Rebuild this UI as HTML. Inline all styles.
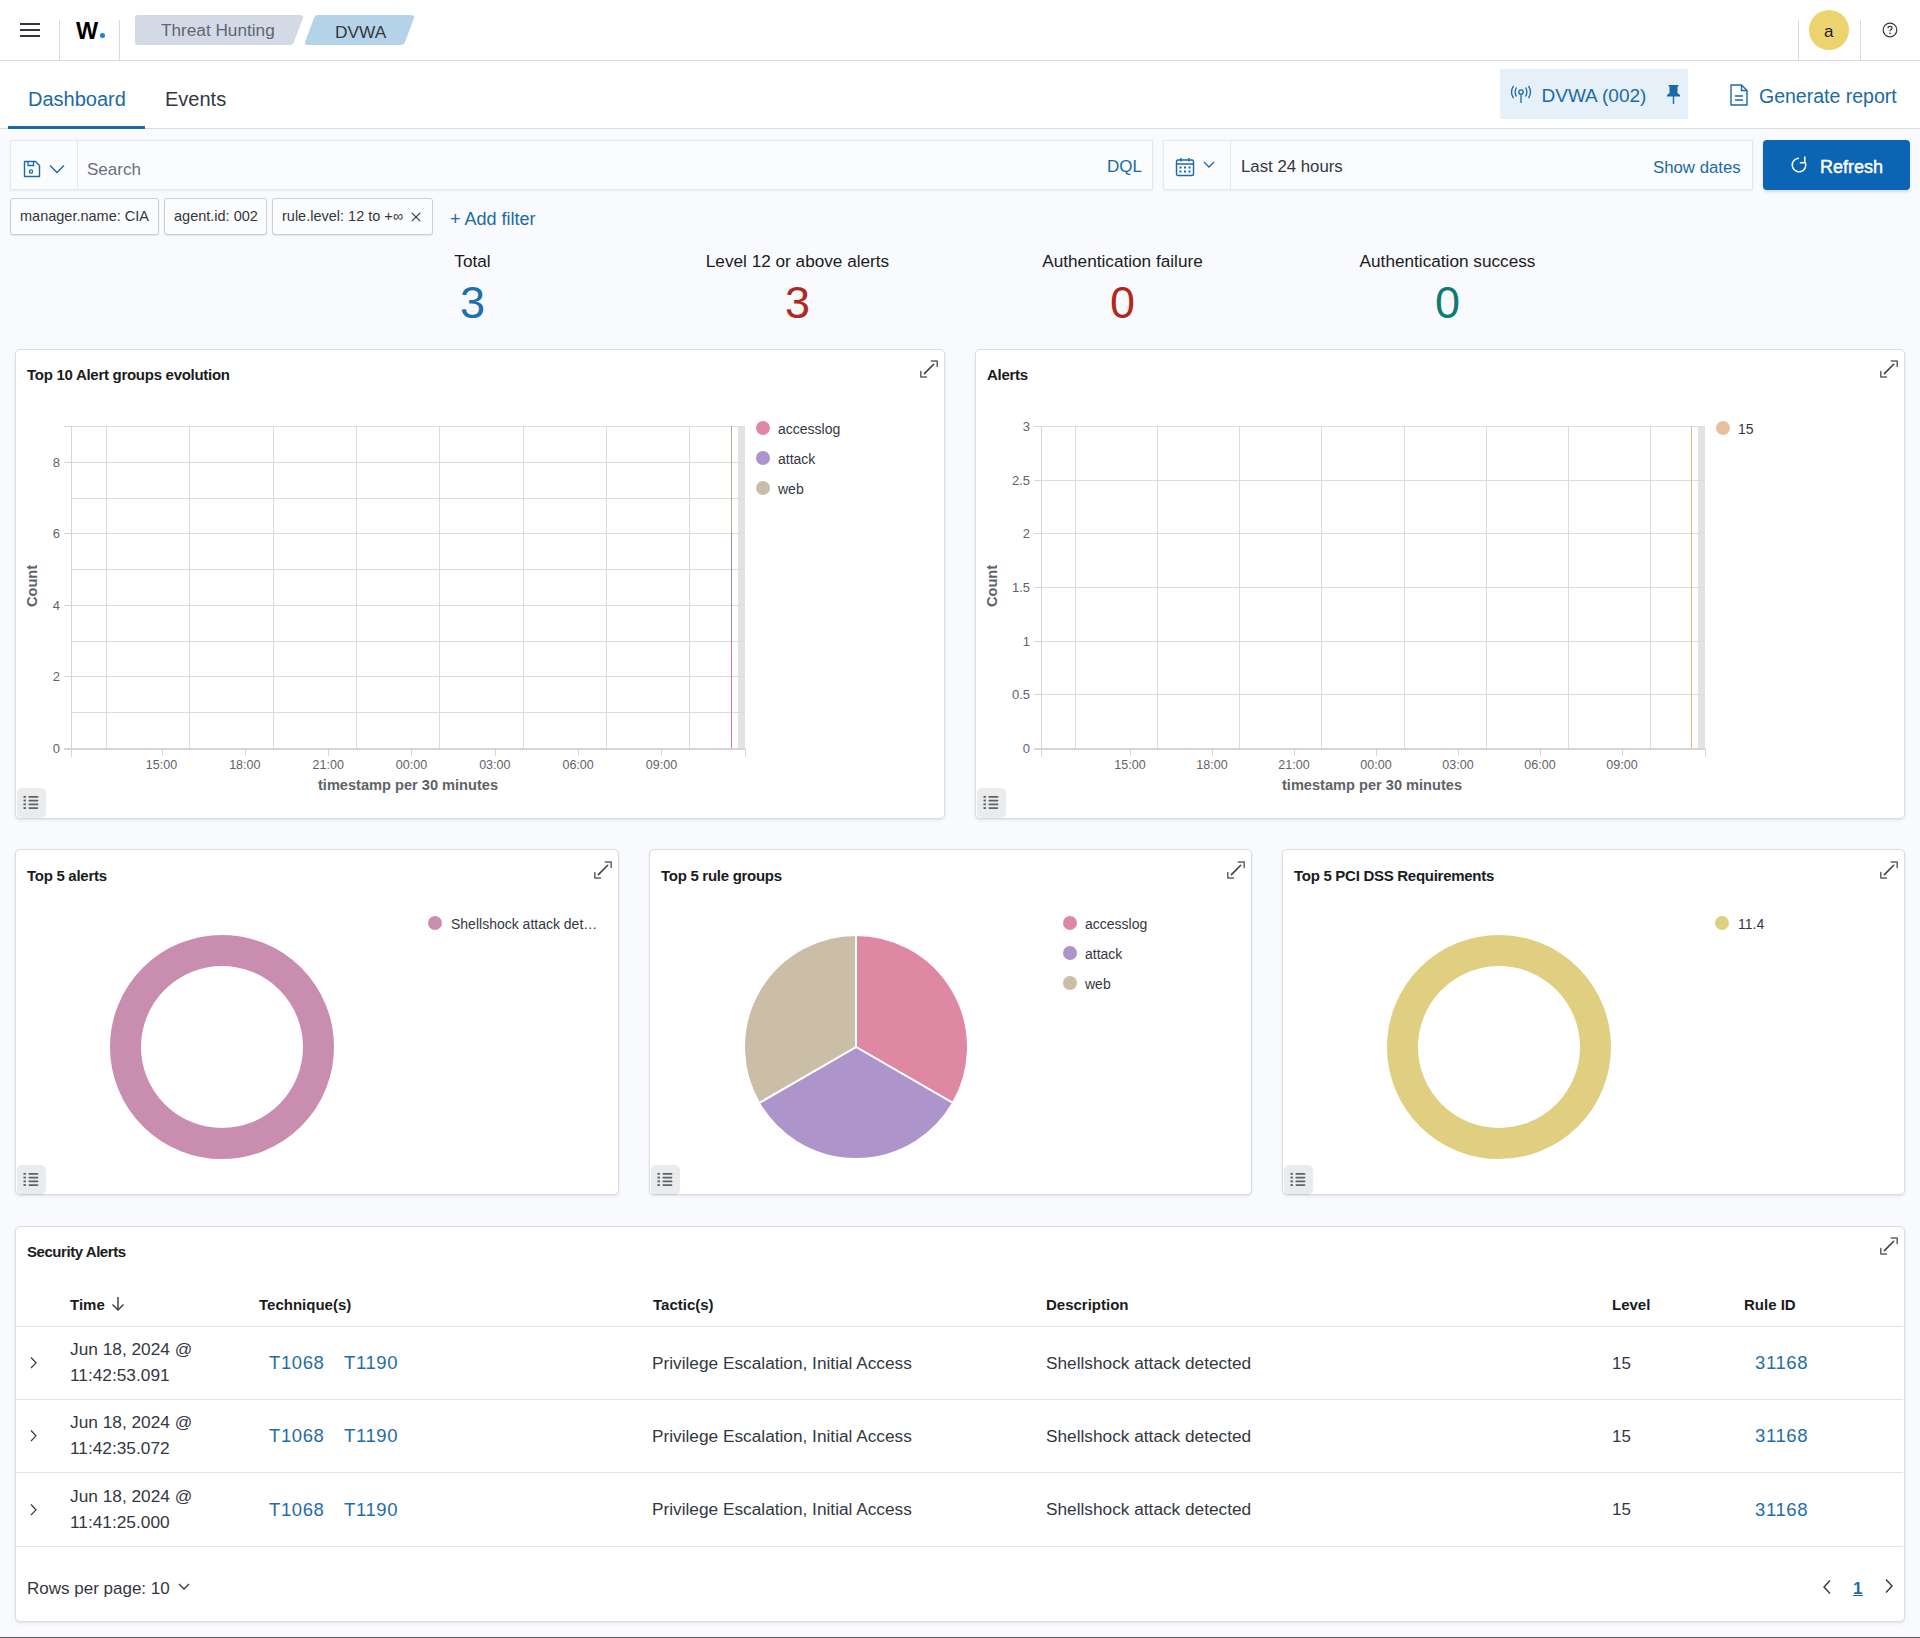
<!DOCTYPE html>
<html><head><meta charset="utf-8">
<style>
*{box-sizing:border-box;margin:0;padding:0}
html,body{width:1920px;height:1638px;overflow:hidden}
body{background:#F9FAFD;font-family:"Liberation Sans",sans-serif;color:#343741;position:relative}
.abs{position:absolute}
.t{position:absolute;white-space:nowrap;line-height:1}
#hdr{position:absolute;left:0;top:0;width:1920px;height:61px;background:#fff;border-bottom:1px solid #D9DADF}
#tabs{position:absolute;left:0;top:61px;width:1920px;height:68px;background:#fff;border-bottom:1px solid #D9DADF}
.vsep{position:absolute;top:20px;width:1px;height:40px;background:#D8DBE0}
.panel{position:absolute;background:#fff;border:1px solid #D9DCE2;border-radius:5px;box-shadow:0 1px 2px rgba(0,0,0,.06),0 2px 4px rgba(0,0,0,.04)}
.ptitle{position:absolute;left:11px;top:17px;font-size:15px;letter-spacing:-0.28px;font-weight:bold;color:#1a1c21;white-space:nowrap;line-height:1}
.expand{position:absolute;width:20px;height:20px}
.listbtn{position:absolute;width:29px;height:29px;background:#EAEBEC;border-radius:5px;box-shadow:0 1px 1px rgba(0,0,0,.08)}
.pill{position:absolute;top:198px;height:37px;background:#FBFCFD;border:1px solid #C9CED8;border-radius:3px;box-shadow:0 1px 1px rgba(0,0,0,.08);font-size:14.5px;color:#343741;padding:0 9px;line-height:34px;white-space:nowrap}
.th{position:absolute;top:1297px;font-size:15px;font-weight:bold;color:#1a1c21;white-space:nowrap;line-height:1}
.row{position:absolute;left:16px;width:1887px;height:1px;background:#E2E4E8}
.cell{position:absolute;font-size:17px;color:#343741;white-space:nowrap;line-height:1}
.link{position:absolute;font-size:18.5px;letter-spacing:0.6px;color:#1F6DA8;white-space:nowrap;line-height:1}
.lg{position:absolute;font-size:14px;color:#343741;white-space:nowrap;line-height:1}
.dot{position:absolute;width:14px;height:14px;border-radius:50%}
</style></head><body>

<!-- HEADER -->
<div id="hdr">
  <svg class="abs" style="left:20px;top:22px" width="20" height="16" viewBox="0 0 20 16">
    <rect x="0" y="1" width="20" height="2" fill="#343741"/>
    <rect x="0" y="7" width="20" height="2" fill="#343741"/>
    <rect x="0" y="13" width="20" height="2" fill="#343741"/>
  </svg>
  <div class="vsep" style="left:59px"></div>
  <div class="t" style="left:76px;top:20px;font-size:23px;font-weight:bold;color:#000;transform:scaleX(1.02);transform-origin:left">W</div>
  <div class="abs" style="left:100px;top:33px;width:5px;height:5px;border-radius:50%;background:#1F7CE8"></div>
  <div class="vsep" style="left:119px"></div>
  <svg class="abs" style="left:135px;top:15px" width="290" height="30" viewBox="0 0 290 30">
    <path d="M3 0 H165 Q169 0 168 3 L159 27 Q158 30 154 30 H3 Q0 30 0 27 V3 Q0 0 3 0Z" fill="#D3DAE6"/>
    <path d="M183 0 H276 Q280 0 279 3 L270 27 Q269 30 265 30 H173 Q169 30 170 27 L179 3 Q180 0 183 0Z" fill="#B4D3E9"/>
  </svg>
  <div class="t" style="left:161px;top:22px;font-size:17.2px;color:#5E6675">Threat Hunting</div>
  <div class="t" style="left:335px;top:24px;font-size:17.3px;color:#343741">DVWA</div>
  <div class="vsep" style="left:1798px"></div>
  <div class="abs" style="left:1809px;top:10px;width:40px;height:40px;border-radius:50%;background:#EDD36E"></div>
  <div class="t" style="left:1824px;top:23px;font-size:17px;color:#1a1c21">a</div>
  <div class="vsep" style="left:1860px"></div>
  <svg class="abs" style="left:1882px;top:22px" width="16" height="16" viewBox="0 0 16 16">
    <circle cx="8" cy="8" r="6.8" fill="none" stroke="#343741" stroke-width="1.2"/>
    <path d="M6 6.2 Q6 4.3 8 4.3 Q10 4.3 10 6.1 Q10 7.3 8.6 7.9 Q8 8.2 8 9.3" fill="none" stroke="#343741" stroke-width="1.2"/>
    <circle cx="8" cy="11.4" r="0.8" fill="#343741"/>
  </svg>
</div>

<!-- TABS -->
<div id="tabs">
  <div class="t" style="left:28px;top:28px;font-size:20px;color:#1A6AA6">Dashboard</div>
  <div class="abs" style="left:8px;top:65px;width:137px;height:3px;background:#1A6AA6"></div>
  <div class="t" style="left:165px;top:28px;font-size:20px;color:#343741">Events</div>
  <div class="abs" style="left:1500px;top:8px;width:188px;height:50px;background:#E6F0F8"></div>
  <svg class="abs" style="left:1510px;top:24px" width="22" height="20" viewBox="0 0 22 20">
    <g fill="none" stroke="#1A6AA6" stroke-width="1.3">
      <circle cx="11" cy="7" r="2.2"/>
      <path d="M11 9.2 V18"/>
      <path d="M6.5 2.5 Q3.8 7 6.5 11.5"/><path d="M15.5 2.5 Q18.2 7 15.5 11.5"/>
      <path d="M3.5 0.8 Q-0.5 7 3.5 13.2"/><path d="M18.5 0.8 Q22.5 7 18.5 13.2"/>
    </g>
  </svg>
  <div class="t" style="left:1541.5px;top:25px;font-size:19px;color:#1A6AA6">DVWA (002)</div>
  <svg class="abs" style="left:1666px;top:23px" width="15" height="20" viewBox="0 0 15 20">
    <path d="M3 1 H12 Q12.5 1 12.5 2 L11.5 3 V9 L14 11 V12.5 H1 V11 L3.5 9 V3 L2.5 2 Q2.5 1 3 1Z" fill="#1A6AA6"/>
    <rect x="6.8" y="12" width="1.4" height="8" fill="#1A6AA6"/>
  </svg>
  <svg class="abs" style="left:1729px;top:23px" width="20" height="22" viewBox="0 0 20 22">
    <path d="M2 1 H12.5 L18 6.5 V21 H2 Z" fill="none" stroke="#1A6AA6" stroke-width="1.4" stroke-linejoin="round"/>
    <path d="M12.5 1 V6.5 H18" fill="none" stroke="#1A6AA6" stroke-width="1.4"/>
    <path d="M6 12 H14 M6 16 H14" stroke="#1A6AA6" stroke-width="1.4"/>
  </svg>
  <div class="t" style="left:1759px;top:26px;font-size:19.5px;color:#1A6AA6">Generate report</div>
</div>

<!-- SEARCH BAR -->
<div class="abs" style="left:10px;top:140px;width:1143px;height:50px;background:#FBFCFD;border:1px solid #E3E7EE;box-shadow:0 1px 2px rgba(0,0,0,.06)"></div>
<div class="abs" style="left:77px;top:141px;width:1px;height:48px;background:#E3E7EE"></div>
<svg class="abs" style="left:23px;top:160px" width="18" height="18" viewBox="0 0 18 18">
  <path d="M1.5 1.5 H12.5 L16.5 5.5 V16.5 H1.5 Z" fill="none" stroke="#1A6AA6" stroke-width="1.4" stroke-linejoin="round"/>
  <path d="M5 1.5 V5.5 H10.5 V1.5" fill="none" stroke="#1A6AA6" stroke-width="1.3"/>
  <circle cx="8" cy="11.4" r="1.6" fill="none" stroke="#1A6AA6" stroke-width="1.3"/>
</svg>
<svg class="abs" style="left:49px;top:164px" width="16" height="10" viewBox="0 0 16 10">
  <path d="M1 1.5 L8 8.5 L15 1.5" fill="none" stroke="#1A6AA6" stroke-width="1.4"/>
</svg>
<div class="t" style="left:87px;top:161px;font-size:17px;color:#69707D">Search</div>
<div class="t" style="left:1107px;top:158px;font-size:17px;color:#1A6AA6">DQL</div>

<div class="abs" style="left:1163px;top:140px;width:590px;height:50px;background:#FBFCFD;border:1px solid #E3E7EE;box-shadow:0 1px 2px rgba(0,0,0,.06)"></div>
<div class="abs" style="left:1230px;top:141px;width:1px;height:48px;background:#E3E7EE"></div>
<svg class="abs" style="left:1175px;top:157px" width="20" height="20" viewBox="0 0 20 20">
  <rect x="1.5" y="3" width="17" height="15.5" rx="1.5" fill="none" stroke="#1A6AA6" stroke-width="1.4"/>
  <path d="M1.5 7 H18.5 M6 1 V4.5 M14 1 V4.5" stroke="#1A6AA6" stroke-width="1.4"/>
  <g fill="#1A6AA6"><rect x="4.5" y="9.5" width="2" height="2"/><rect x="9" y="9.5" width="2" height="2"/><rect x="13.5" y="9.5" width="2" height="2"/><rect x="4.5" y="13.5" width="2" height="2"/><rect x="9" y="13.5" width="2" height="2"/><rect x="13.5" y="13.5" width="2" height="2"/></g>
</svg>
<svg class="abs" style="left:1203px;top:161px" width="12" height="8" viewBox="0 0 12 8">
  <path d="M1 1 L6 6 L11 1" fill="none" stroke="#1A6AA6" stroke-width="1.3"/>
</svg>
<div class="t" style="left:1241px;top:159px;font-size:16.8px;color:#343741">Last 24 hours</div>
<div class="t" style="left:1653px;top:160px;font-size:16.8px;color:#1A6AA6">Show dates</div>

<div class="abs" style="left:1763px;top:140px;width:147px;height:50px;background:#0B64B4;border-radius:4px;box-shadow:0 2px 3px rgba(0,0,0,.12)"></div>
<svg class="abs" style="left:1790px;top:156px" width="18" height="18" viewBox="0 0 18 18">
  <path d="M9 2.2 A6.8 6.8 0 1 0 15.2 6.2" fill="none" stroke="#fff" stroke-width="1.5"/>
  <path d="M14.8 0.6 V6.8 H9.8" fill="none" stroke="#fff" stroke-width="1.5"/>
</svg>
<div class="t" style="left:1820px;top:158px;font-size:18px;color:#fff;-webkit-text-stroke:0.45px #fff">Refresh</div>

<!-- FILTER PILLS -->
<div class="pill" style="left:10px;width:149px">manager.name: CIA</div>
<div class="pill" style="left:164px;width:103px">agent.id: 002</div>
<div class="pill" style="left:272px;width:161px">rule.level: 12 to +∞ <svg style="position:absolute;left:138px;top:13px" width="10" height="10" viewBox="0 0 10 10"><path d="M0.8 0.8 L9.2 9.2 M9.2 0.8 L0.8 9.2" stroke="#343741" stroke-width="1.2"/></svg></div>
<div class="t" style="left:450px;top:210px;font-size:18px;color:#1A6AA6">+ Add filter</div>

<!-- STATS -->
<div class="t" style="left:310px;width:325px;text-align:center;top:253px;font-size:17.2px;color:#1a1c21">Total</div>
<div class="t" style="left:310px;width:325px;text-align:center;top:280px;font-size:45px;color:#1B6FB3">3</div>
<div class="t" style="left:635px;width:325px;text-align:center;top:253px;font-size:17.2px;color:#1a1c21">Level 12 or above alerts</div>
<div class="t" style="left:635px;width:325px;text-align:center;top:280px;font-size:45px;color:#B1291E">3</div>
<div class="t" style="left:960px;width:325px;text-align:center;top:253px;font-size:17.2px;color:#1a1c21">Authentication failure</div>
<div class="t" style="left:960px;width:325px;text-align:center;top:280px;font-size:45px;color:#B1291E">0</div>
<div class="t" style="left:1285px;width:325px;text-align:center;top:253px;font-size:17.2px;color:#1a1c21">Authentication success</div>
<div class="t" style="left:1285px;width:325px;text-align:center;top:280px;font-size:45px;color:#0E7B74">0</div>

<!--PANELS-->
<div class="panel" style="left:15px;top:349px;width:930px;height:470px">
<div class="ptitle" style="top:17.3px">Top 10 Alert groups evolution</div>
</div>
<svg class="abs" style="left:920px;top:360px" width="18" height="18" viewBox="0 0 18 18"><g fill="none" stroke-width="1.5" stroke-linejoin="round" stroke-linecap="round"><path d="M4.4 13.6 L13.7 4.3" stroke="#3a3d42"/><path d="M11.3 0.9 H17.2 V6.5 M0.8 11.6 V17.1 H6.5" stroke="#5f6368"/></g></svg>
<div class="listbtn" style="left:17px;top:788px"><svg class="abs" style="left:0;top:0" width="29" height="29" viewBox="0 0 29 29"><g fill="#5f6368"><rect x="6.5" y="7.9" width="2.4" height="1.9"/><rect x="6.5" y="11.6" width="2.4" height="1.9"/><rect x="6.5" y="15.4" width="2.4" height="1.9"/><rect x="6.5" y="19.1" width="2.4" height="1.9"/><rect x="11.4" y="8" width="10" height="1.7" rx=".8"/><rect x="11.4" y="11.7" width="10" height="1.7" rx=".8"/><rect x="11.4" y="15.5" width="10" height="1.7" rx=".8"/><rect x="11.4" y="19.2" width="10" height="1.7" rx=".8"/></g></svg></div>
<svg class="abs" style="left:0;top:0" width="1920" height="830" viewBox="0 0 1920 830">
<rect x="738" y="426" width="7" height="322" fill="#E3E3E3"/>
<line x1="71" y1="748.5" x2="745" y2="748.5" stroke="#DCDCDC" stroke-width="1"/>
<line x1="71" y1="712.5" x2="745" y2="712.5" stroke="#DCDCDC" stroke-width="1"/>
<line x1="71" y1="676.5" x2="745" y2="676.5" stroke="#DCDCDC" stroke-width="1"/>
<line x1="71" y1="641.5" x2="745" y2="641.5" stroke="#DCDCDC" stroke-width="1"/>
<line x1="71" y1="605.5" x2="745" y2="605.5" stroke="#DCDCDC" stroke-width="1"/>
<line x1="71" y1="569.5" x2="745" y2="569.5" stroke="#DCDCDC" stroke-width="1"/>
<line x1="71" y1="533.5" x2="745" y2="533.5" stroke="#DCDCDC" stroke-width="1"/>
<line x1="71" y1="498.5" x2="745" y2="498.5" stroke="#DCDCDC" stroke-width="1"/>
<line x1="71" y1="462.5" x2="745" y2="462.5" stroke="#DCDCDC" stroke-width="1"/>
<line x1="71" y1="426.5" x2="745" y2="426.5" stroke="#DCDCDC" stroke-width="1"/>
<line x1="106.5" y1="426" x2="106.5" y2="748" stroke="#DCDCDC" stroke-width="1"/>
<line x1="189.5" y1="426" x2="189.5" y2="748" stroke="#DCDCDC" stroke-width="1"/>
<line x1="273.5" y1="426" x2="273.5" y2="748" stroke="#DCDCDC" stroke-width="1"/>
<line x1="356.5" y1="426" x2="356.5" y2="748" stroke="#DCDCDC" stroke-width="1"/>
<line x1="439.5" y1="426" x2="439.5" y2="748" stroke="#DCDCDC" stroke-width="1"/>
<line x1="523.5" y1="426" x2="523.5" y2="748" stroke="#DCDCDC" stroke-width="1"/>
<line x1="606.5" y1="426" x2="606.5" y2="748" stroke="#DCDCDC" stroke-width="1"/>
<line x1="689.5" y1="426" x2="689.5" y2="748" stroke="#DCDCDC" stroke-width="1"/>
<rect x="731" y="641" width="1" height="107" fill="#D07894"/>
<rect x="731" y="533" width="1" height="108" fill="#9A84C0"/>
<rect x="731" y="426" width="1" height="107" fill="#B8AA8E"/>
<line x1="71.5" y1="426" x2="71.5" y2="748" stroke="#D6D6D6" stroke-width="1"/>
<line x1="64" y1="748.5" x2="71" y2="748.5" stroke="#D6D6D6" stroke-width="1"/>
<text x="60" y="753.0" text-anchor="end" font-size="13" fill="#5f6368" font-family="Liberation Sans">0</text>
<line x1="64" y1="676.5" x2="71" y2="676.5" stroke="#D6D6D6" stroke-width="1"/>
<text x="60" y="681.0" text-anchor="end" font-size="13" fill="#5f6368" font-family="Liberation Sans">2</text>
<line x1="64" y1="605.5" x2="71" y2="605.5" stroke="#D6D6D6" stroke-width="1"/>
<text x="60" y="610.0" text-anchor="end" font-size="13" fill="#5f6368" font-family="Liberation Sans">4</text>
<line x1="64" y1="533.5" x2="71" y2="533.5" stroke="#D6D6D6" stroke-width="1"/>
<text x="60" y="538.0" text-anchor="end" font-size="13" fill="#5f6368" font-family="Liberation Sans">6</text>
<line x1="64" y1="462.5" x2="71" y2="462.5" stroke="#D6D6D6" stroke-width="1"/>
<text x="60" y="467.0" text-anchor="end" font-size="13" fill="#5f6368" font-family="Liberation Sans">8</text>
<line x1="64" y1="426.5" x2="71" y2="426.5" stroke="#D6D6D6" stroke-width="1"/>
<rect x="64" y="748" width="682" height="2" fill="#D6D6D6"/>
<rect x="71" y="748" width="1" height="9" fill="#D6D6D6"/>
<rect x="745" y="748" width="1" height="9" fill="#D6D6D6"/>
<rect x="162" y="748" width="1" height="8" fill="#D6D6D6"/>
<text x="161.5" y="769" text-anchor="middle" font-size="12.5" fill="#5f6368" font-family="Liberation Sans">15:00</text>
<rect x="245" y="748" width="1" height="8" fill="#D6D6D6"/>
<text x="244.8" y="769" text-anchor="middle" font-size="12.5" fill="#5f6368" font-family="Liberation Sans">18:00</text>
<rect x="328" y="748" width="1" height="8" fill="#D6D6D6"/>
<text x="328.2" y="769" text-anchor="middle" font-size="12.5" fill="#5f6368" font-family="Liberation Sans">21:00</text>
<rect x="411" y="748" width="1" height="8" fill="#D6D6D6"/>
<text x="411.5" y="769" text-anchor="middle" font-size="12.5" fill="#5f6368" font-family="Liberation Sans">00:00</text>
<rect x="495" y="748" width="1" height="8" fill="#D6D6D6"/>
<text x="494.8" y="769" text-anchor="middle" font-size="12.5" fill="#5f6368" font-family="Liberation Sans">03:00</text>
<rect x="578" y="748" width="1" height="8" fill="#D6D6D6"/>
<text x="578.1" y="769" text-anchor="middle" font-size="12.5" fill="#5f6368" font-family="Liberation Sans">06:00</text>
<rect x="661" y="748" width="1" height="8" fill="#D6D6D6"/>
<text x="661.5" y="769" text-anchor="middle" font-size="12.5" fill="#5f6368" font-family="Liberation Sans">09:00</text>
<text x="408" y="790" text-anchor="middle" font-size="14.6" font-weight="bold" fill="#5f6368" font-family="Liberation Sans">timestamp per 30 minutes</text>
<text transform="translate(37,586) rotate(-90)" text-anchor="middle" font-size="14.6" font-weight="bold" fill="#5f6368" font-family="Liberation Sans">Count</text>
</svg>
<div class="dot" style="left:756px;top:421px;background:#DE88A4"></div>
<div class="lg" style="left:778px;top:422px">accesslog</div>
<div class="dot" style="left:756px;top:451px;background:#AD94CA"></div>
<div class="lg" style="left:778px;top:452px">attack</div>
<div class="dot" style="left:756px;top:481px;background:#CBBEA6"></div>
<div class="lg" style="left:778px;top:482px">web</div>
<div class="panel" style="left:975px;top:349px;width:930px;height:470px">
<div class="ptitle" style="top:17.3px">Alerts</div>
</div>
<svg class="abs" style="left:1880px;top:360px" width="18" height="18" viewBox="0 0 18 18"><g fill="none" stroke-width="1.5" stroke-linejoin="round" stroke-linecap="round"><path d="M4.4 13.6 L13.7 4.3" stroke="#3a3d42"/><path d="M11.3 0.9 H17.2 V6.5 M0.8 11.6 V17.1 H6.5" stroke="#5f6368"/></g></svg>
<div class="listbtn" style="left:977px;top:788px"><svg class="abs" style="left:0;top:0" width="29" height="29" viewBox="0 0 29 29"><g fill="#5f6368"><rect x="6.5" y="7.9" width="2.4" height="1.9"/><rect x="6.5" y="11.6" width="2.4" height="1.9"/><rect x="6.5" y="15.4" width="2.4" height="1.9"/><rect x="6.5" y="19.1" width="2.4" height="1.9"/><rect x="11.4" y="8" width="10" height="1.7" rx=".8"/><rect x="11.4" y="11.7" width="10" height="1.7" rx=".8"/><rect x="11.4" y="15.5" width="10" height="1.7" rx=".8"/><rect x="11.4" y="19.2" width="10" height="1.7" rx=".8"/></g></svg></div>
<svg class="abs" style="left:0;top:0" width="1920" height="830" viewBox="0 0 1920 830">
<rect x="1698" y="426" width="7" height="322" fill="#E3E3E3"/>
<line x1="1041" y1="748.5" x2="1705" y2="748.5" stroke="#DCDCDC" stroke-width="1"/>
<line x1="1041" y1="694.5" x2="1705" y2="694.5" stroke="#DCDCDC" stroke-width="1"/>
<line x1="1041" y1="641.5" x2="1705" y2="641.5" stroke="#DCDCDC" stroke-width="1"/>
<line x1="1041" y1="587.5" x2="1705" y2="587.5" stroke="#DCDCDC" stroke-width="1"/>
<line x1="1041" y1="533.5" x2="1705" y2="533.5" stroke="#DCDCDC" stroke-width="1"/>
<line x1="1041" y1="480.5" x2="1705" y2="480.5" stroke="#DCDCDC" stroke-width="1"/>
<line x1="1041" y1="426.5" x2="1705" y2="426.5" stroke="#DCDCDC" stroke-width="1"/>
<line x1="1075.5" y1="426" x2="1075.5" y2="748" stroke="#DCDCDC" stroke-width="1"/>
<line x1="1157.5" y1="426" x2="1157.5" y2="748" stroke="#DCDCDC" stroke-width="1"/>
<line x1="1239.5" y1="426" x2="1239.5" y2="748" stroke="#DCDCDC" stroke-width="1"/>
<line x1="1321.5" y1="426" x2="1321.5" y2="748" stroke="#DCDCDC" stroke-width="1"/>
<line x1="1404.5" y1="426" x2="1404.5" y2="748" stroke="#DCDCDC" stroke-width="1"/>
<line x1="1486.5" y1="426" x2="1486.5" y2="748" stroke="#DCDCDC" stroke-width="1"/>
<line x1="1568.5" y1="426" x2="1568.5" y2="748" stroke="#DCDCDC" stroke-width="1"/>
<line x1="1650.5" y1="426" x2="1650.5" y2="748" stroke="#DCDCDC" stroke-width="1"/>
<rect x="1691" y="426" width="1" height="322" fill="#E2B48A"/>
<line x1="1041.5" y1="426" x2="1041.5" y2="748" stroke="#D6D6D6" stroke-width="1"/>
<line x1="1034" y1="748.5" x2="1041" y2="748.5" stroke="#D6D6D6" stroke-width="1"/>
<text x="1030" y="753.0" text-anchor="end" font-size="13" fill="#5f6368" font-family="Liberation Sans">0</text>
<line x1="1034" y1="694.5" x2="1041" y2="694.5" stroke="#D6D6D6" stroke-width="1"/>
<text x="1030" y="699.0" text-anchor="end" font-size="13" fill="#5f6368" font-family="Liberation Sans">0.5</text>
<line x1="1034" y1="641.5" x2="1041" y2="641.5" stroke="#D6D6D6" stroke-width="1"/>
<text x="1030" y="646.0" text-anchor="end" font-size="13" fill="#5f6368" font-family="Liberation Sans">1</text>
<line x1="1034" y1="587.5" x2="1041" y2="587.5" stroke="#D6D6D6" stroke-width="1"/>
<text x="1030" y="592.0" text-anchor="end" font-size="13" fill="#5f6368" font-family="Liberation Sans">1.5</text>
<line x1="1034" y1="533.5" x2="1041" y2="533.5" stroke="#D6D6D6" stroke-width="1"/>
<text x="1030" y="538.0" text-anchor="end" font-size="13" fill="#5f6368" font-family="Liberation Sans">2</text>
<line x1="1034" y1="480.5" x2="1041" y2="480.5" stroke="#D6D6D6" stroke-width="1"/>
<text x="1030" y="485.0" text-anchor="end" font-size="13" fill="#5f6368" font-family="Liberation Sans">2.5</text>
<line x1="1034" y1="426.5" x2="1041" y2="426.5" stroke="#D6D6D6" stroke-width="1"/>
<text x="1030" y="431.0" text-anchor="end" font-size="13" fill="#5f6368" font-family="Liberation Sans">3</text>
<line x1="1034" y1="426.5" x2="1041" y2="426.5" stroke="#D6D6D6" stroke-width="1"/>
<rect x="1034" y="748" width="672" height="2" fill="#D6D6D6"/>
<rect x="1041" y="748" width="1" height="9" fill="#D6D6D6"/>
<rect x="1705" y="748" width="1" height="9" fill="#D6D6D6"/>
<rect x="1130" y="748" width="1" height="8" fill="#D6D6D6"/>
<text x="1130.0" y="769" text-anchor="middle" font-size="12.5" fill="#5f6368" font-family="Liberation Sans">15:00</text>
<rect x="1212" y="748" width="1" height="8" fill="#D6D6D6"/>
<text x="1212.0" y="769" text-anchor="middle" font-size="12.5" fill="#5f6368" font-family="Liberation Sans">18:00</text>
<rect x="1294" y="748" width="1" height="8" fill="#D6D6D6"/>
<text x="1294.0" y="769" text-anchor="middle" font-size="12.5" fill="#5f6368" font-family="Liberation Sans">21:00</text>
<rect x="1376" y="748" width="1" height="8" fill="#D6D6D6"/>
<text x="1376.0" y="769" text-anchor="middle" font-size="12.5" fill="#5f6368" font-family="Liberation Sans">00:00</text>
<rect x="1458" y="748" width="1" height="8" fill="#D6D6D6"/>
<text x="1458.0" y="769" text-anchor="middle" font-size="12.5" fill="#5f6368" font-family="Liberation Sans">03:00</text>
<rect x="1540" y="748" width="1" height="8" fill="#D6D6D6"/>
<text x="1540.0" y="769" text-anchor="middle" font-size="12.5" fill="#5f6368" font-family="Liberation Sans">06:00</text>
<rect x="1622" y="748" width="1" height="8" fill="#D6D6D6"/>
<text x="1622.0" y="769" text-anchor="middle" font-size="12.5" fill="#5f6368" font-family="Liberation Sans">09:00</text>
<text x="1372" y="790" text-anchor="middle" font-size="14.6" font-weight="bold" fill="#5f6368" font-family="Liberation Sans">timestamp per 30 minutes</text>
<text transform="translate(997,586) rotate(-90)" text-anchor="middle" font-size="14.6" font-weight="bold" fill="#5f6368" font-family="Liberation Sans">Count</text>
</svg>
<div class="dot" style="left:1716px;top:421px;background:#E8C19C"></div>
<div class="lg" style="left:1738px;top:422px">15</div>
<div class="panel" style="left:15px;top:849px;width:604px;height:346px">
<div class="ptitle" style="top:18.3px">Top 5 alerts</div>
</div>
<svg class="abs" style="left:594px;top:861px" width="18" height="18" viewBox="0 0 18 18"><g fill="none" stroke-width="1.5" stroke-linejoin="round" stroke-linecap="round"><path d="M4.4 13.6 L13.7 4.3" stroke="#3a3d42"/><path d="M11.3 0.9 H17.2 V6.5 M0.8 11.6 V17.1 H6.5" stroke="#5f6368"/></g></svg>
<div class="listbtn" style="left:17px;top:1165px"><svg class="abs" style="left:0;top:0" width="29" height="29" viewBox="0 0 29 29"><g fill="#5f6368"><rect x="6.5" y="7.9" width="2.4" height="1.9"/><rect x="6.5" y="11.6" width="2.4" height="1.9"/><rect x="6.5" y="15.4" width="2.4" height="1.9"/><rect x="6.5" y="19.1" width="2.4" height="1.9"/><rect x="11.4" y="8" width="10" height="1.7" rx=".8"/><rect x="11.4" y="11.7" width="10" height="1.7" rx=".8"/><rect x="11.4" y="15.5" width="10" height="1.7" rx=".8"/><rect x="11.4" y="19.2" width="10" height="1.7" rx=".8"/></g></svg></div>
<svg class="abs" style="left:107px;top:932px" width="230" height="230" viewBox="-115 -115 230 230">
<circle cx="0" cy="0" r="96.5" fill="none" stroke="#C98EAF" stroke-width="31"/>
</svg>
<div class="dot" style="left:428px;top:916px;background:#C98EAF"></div><div class="lg" style="left:451px;top:917px">Shellshock attack det…</div>
<div class="panel" style="left:649px;top:849px;width:603px;height:346px">
<div class="ptitle" style="top:18.3px">Top 5 rule groups</div>
</div>
<svg class="abs" style="left:1227px;top:861px" width="18" height="18" viewBox="0 0 18 18"><g fill="none" stroke-width="1.5" stroke-linejoin="round" stroke-linecap="round"><path d="M4.4 13.6 L13.7 4.3" stroke="#3a3d42"/><path d="M11.3 0.9 H17.2 V6.5 M0.8 11.6 V17.1 H6.5" stroke="#5f6368"/></g></svg>
<div class="listbtn" style="left:651px;top:1165px"><svg class="abs" style="left:0;top:0" width="29" height="29" viewBox="0 0 29 29"><g fill="#5f6368"><rect x="6.5" y="7.9" width="2.4" height="1.9"/><rect x="6.5" y="11.6" width="2.4" height="1.9"/><rect x="6.5" y="15.4" width="2.4" height="1.9"/><rect x="6.5" y="19.1" width="2.4" height="1.9"/><rect x="11.4" y="8" width="10" height="1.7" rx=".8"/><rect x="11.4" y="11.7" width="10" height="1.7" rx=".8"/><rect x="11.4" y="15.5" width="10" height="1.7" rx=".8"/><rect x="11.4" y="19.2" width="10" height="1.7" rx=".8"/></g></svg></div>
<svg class="abs" style="left:741px;top:932px" width="230" height="230" viewBox="-115 -115 230 230">
<path d="M0 0 L0.00 -112.00 A112 112 0 0 1 96.99 56.00 Z" fill="#DE88A4" stroke="#fff" stroke-width="2"/>
<path d="M0 0 L96.99 56.00 A112 112 0 0 1 -96.99 56.00 Z" fill="#AD94CA" stroke="#fff" stroke-width="2"/>
<path d="M0 0 L-96.99 56.00 A112 112 0 0 1 -0.00 -112.00 Z" fill="#CBBEA6" stroke="#fff" stroke-width="2"/>
</svg>
<div class="dot" style="left:1063px;top:916px;background:#DE88A4"></div><div class="lg" style="left:1085px;top:917px">accesslog</div>
<div class="dot" style="left:1063px;top:946px;background:#AD94CA"></div><div class="lg" style="left:1085px;top:947px">attack</div>
<div class="dot" style="left:1063px;top:976px;background:#CBBEA6"></div><div class="lg" style="left:1085px;top:977px">web</div>
<div class="panel" style="left:1282px;top:849px;width:623px;height:346px">
<div class="ptitle" style="top:18.3px">Top 5 PCI DSS Requirements</div>
</div>
<svg class="abs" style="left:1880px;top:861px" width="18" height="18" viewBox="0 0 18 18"><g fill="none" stroke-width="1.5" stroke-linejoin="round" stroke-linecap="round"><path d="M4.4 13.6 L13.7 4.3" stroke="#3a3d42"/><path d="M11.3 0.9 H17.2 V6.5 M0.8 11.6 V17.1 H6.5" stroke="#5f6368"/></g></svg>
<div class="listbtn" style="left:1284px;top:1165px"><svg class="abs" style="left:0;top:0" width="29" height="29" viewBox="0 0 29 29"><g fill="#5f6368"><rect x="6.5" y="7.9" width="2.4" height="1.9"/><rect x="6.5" y="11.6" width="2.4" height="1.9"/><rect x="6.5" y="15.4" width="2.4" height="1.9"/><rect x="6.5" y="19.1" width="2.4" height="1.9"/><rect x="11.4" y="8" width="10" height="1.7" rx=".8"/><rect x="11.4" y="11.7" width="10" height="1.7" rx=".8"/><rect x="11.4" y="15.5" width="10" height="1.7" rx=".8"/><rect x="11.4" y="19.2" width="10" height="1.7" rx=".8"/></g></svg></div>
<svg class="abs" style="left:1384px;top:932px" width="230" height="230" viewBox="-115 -115 230 230">
<circle cx="0" cy="0" r="96.5" fill="none" stroke="#E0CF81" stroke-width="31"/>
</svg>
<div class="dot" style="left:1715px;top:916px;background:#E0CF81"></div><div class="lg" style="left:1738px;top:917px">11.4</div>
<div class="panel" style="left:15px;top:1226px;width:1890px;height:396px">
<div class="ptitle" style="top:17.3px;letter-spacing:-0.45px">Security Alerts</div>
</div>
<svg class="abs" style="left:1880px;top:1237px" width="18" height="18" viewBox="0 0 18 18"><g fill="none" stroke-width="1.5" stroke-linejoin="round" stroke-linecap="round"><path d="M4.4 13.6 L13.7 4.3" stroke="#3a3d42"/><path d="M11.3 0.9 H17.2 V6.5 M0.8 11.6 V17.1 H6.5" stroke="#5f6368"/></g></svg>
<div class="th" style="left:70px">Time</div>
<div class="th" style="left:259px">Technique(s)</div>
<div class="th" style="left:653px">Tactic(s)</div>
<div class="th" style="left:1046px">Description</div>
<div class="th" style="left:1612px">Level</div>
<div class="th" style="left:1744px">Rule ID</div>
<svg class="abs" style="left:111px;top:1296px" width="14" height="15" viewBox="0 0 14 15"><g fill="none" stroke="#343741" stroke-width="1.4"><path d="M7 1 V14"/><path d="M1.5 8.5 L7 14 L12.5 8.5"/></g></svg>
<div class="row" style="top:1326px"></div>
<div class="row" style="top:1399px"></div>
<div class="row" style="top:1472px"></div>
<div class="row" style="top:1546px"></div>
<svg class="abs" style="left:29px;top:1356px" width="10" height="14" viewBox="0 0 10 14"><path d="M2 1.5 L7 6.8 L2 12" fill="none" stroke="#343741" stroke-width="1.2"/></svg>
<div class="cell" style="left:70px;top:1337px;line-height:25.5px;font-size:17.3px">Jun 18, 2024 @<br>11:42:53.091</div>
<div class="link" style="left:269px;top:1354px">T1068</div>
<div class="link" style="left:344px;top:1354px">T1190</div>
<div class="cell" style="left:652px;top:1354.5px;font-size:17.25px">Privilege Escalation, Initial Access</div>
<div class="cell" style="left:1046px;top:1354.5px;font-size:17.25px">Shellshock attack detected</div>
<div class="cell" style="left:1612px;top:1354.5px">15</div>
<div class="link" style="left:1755px;top:1354px">31168</div>
<svg class="abs" style="left:29px;top:1429px" width="10" height="14" viewBox="0 0 10 14"><path d="M2 1.5 L7 6.8 L2 12" fill="none" stroke="#343741" stroke-width="1.2"/></svg>
<div class="cell" style="left:70px;top:1410px;line-height:25.5px;font-size:17.3px">Jun 18, 2024 @<br>11:42:35.072</div>
<div class="link" style="left:269px;top:1427px">T1068</div>
<div class="link" style="left:344px;top:1427px">T1190</div>
<div class="cell" style="left:652px;top:1427.8px;font-size:17.25px">Privilege Escalation, Initial Access</div>
<div class="cell" style="left:1046px;top:1427.8px;font-size:17.25px">Shellshock attack detected</div>
<div class="cell" style="left:1612px;top:1427.8px">15</div>
<div class="link" style="left:1755px;top:1427px">31168</div>
<svg class="abs" style="left:29px;top:1503px" width="10" height="14" viewBox="0 0 10 14"><path d="M2 1.5 L7 6.8 L2 12" fill="none" stroke="#343741" stroke-width="1.2"/></svg>
<div class="cell" style="left:70px;top:1484px;line-height:25.5px;font-size:17.3px">Jun 18, 2024 @<br>11:41:25.000</div>
<div class="link" style="left:269px;top:1501px">T1068</div>
<div class="link" style="left:344px;top:1501px">T1190</div>
<div class="cell" style="left:652px;top:1501.1px;font-size:17.25px">Privilege Escalation, Initial Access</div>
<div class="cell" style="left:1046px;top:1501.1px;font-size:17.25px">Shellshock attack detected</div>
<div class="cell" style="left:1612px;top:1501.1px">15</div>
<div class="link" style="left:1755px;top:1501px">31168</div>
<div class="cell" style="left:27px;top:1580px;color:#343741">Rows per page: 10</div>
<svg class="abs" style="left:178px;top:1583px" width="12" height="8" viewBox="0 0 12 8"><path d="M1 1 L6 6 L11 1" fill="none" stroke="#343741" stroke-width="1.3"/></svg>
<svg class="abs" style="left:1822px;top:1579px" width="10" height="16" viewBox="0 0 10 16"><path d="M8 1.5 L2 8 L8 14.5" fill="none" stroke="#343741" stroke-width="1.4"/></svg>
<div class="link" style="left:1853px;top:1580px;font-weight:bold;font-size:17px;text-decoration:underline">1</div>
<svg class="abs" style="left:1884px;top:1578px" width="10" height="16" viewBox="0 0 10 16"><path d="M2 1.5 L8 8 L2 14.5" fill="none" stroke="#343741" stroke-width="1.4"/></svg>
<div class="abs" style="left:0;top:1637px;width:1920px;height:1px;background:#5A5A5A"></div>
</body></html>
